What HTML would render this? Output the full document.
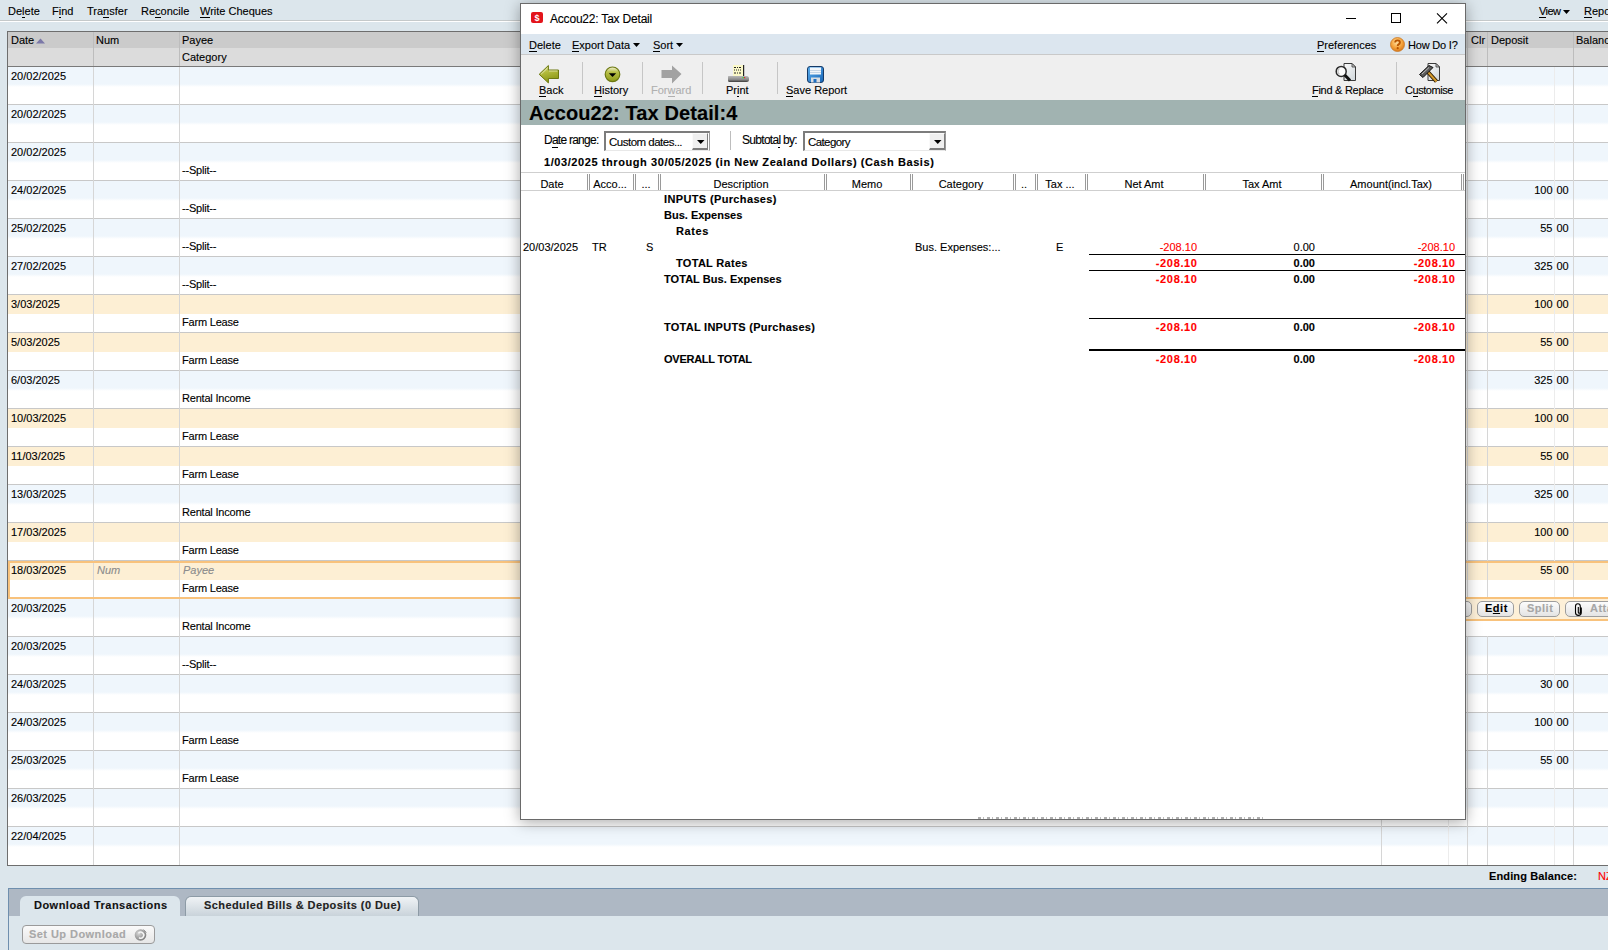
<!DOCTYPE html><html><head><meta charset="utf-8"><style>
html,body{margin:0;padding:0;}
body{width:1608px;height:950px;overflow:hidden;position:relative;background:#dce6ec;font-family:"Liberation Sans",sans-serif;color:#000;}
.t{position:absolute;white-space:nowrap;line-height:1;-webkit-text-stroke:0.12px currentColor;}
.r{position:absolute;}
u{text-decoration:none;border-bottom:1px solid currentColor;}
</style></head><body>
<div class="r" style="left:0px;top:0px;width:1608px;height:20px;background:#dce6ec;"></div>
<div class="r" style="left:0px;top:20px;width:1608px;height:1px;background:#c5c9ca;"></div>
<div class="r" style="left:0px;top:21px;width:1608px;height:1px;background:#ffffff;"></div>
<div class="t" style="left:8px;top:5.69px;font-size:11px;">De<u>l</u>ete</div>
<div class="t" style="left:52px;top:5.69px;font-size:11px;">F<u>i</u>nd</div>
<div class="t" style="left:87px;top:5.69px;font-size:11px;">Tra<u>n</u>sfer</div>
<div class="t" style="left:141px;top:5.69px;font-size:11px;">Re<u>c</u>oncile</div>
<div class="t" style="left:200px;top:5.69px;font-size:11px;"><u>W</u>rite Cheques</div>
<div class="t" style="left:1539px;top:5.69px;font-size:11px;letter-spacing:-0.6px;"><u>V</u>iew</div>
<svg class="r" style="left:1563px;top:10px" width="8" height="5"><path d="M0 0H7L3.5 4Z" fill="#000"/></svg>
<div class="t" style="left:1584px;top:5.69px;font-size:11px;"><u>R</u>eports</div>
<div class="r" style="left:7px;top:31px;width:1601px;height:835px;background:#ffffff;"></div>
<div class="r" style="left:7px;top:31px;width:1601px;height:1px;background:#6e6e6e;"></div>
<div class="r" style="left:7px;top:32px;width:1601px;height:16px;background:#cbcbcb;"></div>
<div class="r" style="left:7px;top:48px;width:1601px;height:18px;background:#dcdcdc;"></div>
<div class="r" style="left:7px;top:66px;width:1601px;height:1px;background:#7a7a7a;"></div>
<div class="r" style="left:7px;top:31px;width:1px;height:835px;background:#6e6e6e;"></div>
<div class="r" style="left:7px;top:865px;width:1601px;height:1px;background:#6e6e6e;"></div>
<div class="r" style="left:8px;top:67px;width:1600px;height:20px;background:linear-gradient(#eff6fc 0px,#eff6fc 17px,#ffffff 20px);"></div>
<div class="r" style="left:8px;top:104px;width:1600px;height:1px;background:#c8c8c8;"></div>
<div class="r" style="left:8px;top:105px;width:1600px;height:20px;background:linear-gradient(#eff6fc 0px,#eff6fc 17px,#ffffff 20px);"></div>
<div class="r" style="left:8px;top:142px;width:1600px;height:1px;background:#c8c8c8;"></div>
<div class="r" style="left:8px;top:143px;width:1600px;height:20px;background:linear-gradient(#eff6fc 0px,#eff6fc 17px,#ffffff 20px);"></div>
<div class="r" style="left:8px;top:180px;width:1600px;height:1px;background:#c8c8c8;"></div>
<div class="r" style="left:8px;top:181px;width:1600px;height:20px;background:linear-gradient(#eff6fc 0px,#eff6fc 17px,#ffffff 20px);"></div>
<div class="r" style="left:8px;top:218px;width:1600px;height:1px;background:#c8c8c8;"></div>
<div class="r" style="left:8px;top:219px;width:1600px;height:20px;background:linear-gradient(#eff6fc 0px,#eff6fc 17px,#ffffff 20px);"></div>
<div class="r" style="left:8px;top:256px;width:1600px;height:1px;background:#c8c8c8;"></div>
<div class="r" style="left:8px;top:257px;width:1600px;height:20px;background:linear-gradient(#eff6fc 0px,#eff6fc 17px,#ffffff 20px);"></div>
<div class="r" style="left:8px;top:294px;width:1600px;height:1px;background:#c8c8c8;"></div>
<div class="r" style="left:8px;top:295px;width:1600px;height:19px;background:#fdefd4;"></div>
<div class="r" style="left:8px;top:332px;width:1600px;height:1px;background:#c8c8c8;"></div>
<div class="r" style="left:8px;top:333px;width:1600px;height:19px;background:#fdefd4;"></div>
<div class="r" style="left:8px;top:370px;width:1600px;height:1px;background:#c8c8c8;"></div>
<div class="r" style="left:8px;top:371px;width:1600px;height:20px;background:linear-gradient(#eff6fc 0px,#eff6fc 17px,#ffffff 20px);"></div>
<div class="r" style="left:8px;top:408px;width:1600px;height:1px;background:#c8c8c8;"></div>
<div class="r" style="left:8px;top:409px;width:1600px;height:19px;background:#fdefd4;"></div>
<div class="r" style="left:8px;top:446px;width:1600px;height:1px;background:#c8c8c8;"></div>
<div class="r" style="left:8px;top:447px;width:1600px;height:19px;background:#fdefd4;"></div>
<div class="r" style="left:8px;top:484px;width:1600px;height:1px;background:#c8c8c8;"></div>
<div class="r" style="left:8px;top:485px;width:1600px;height:20px;background:linear-gradient(#eff6fc 0px,#eff6fc 17px,#ffffff 20px);"></div>
<div class="r" style="left:8px;top:522px;width:1600px;height:1px;background:#c8c8c8;"></div>
<div class="r" style="left:8px;top:523px;width:1600px;height:19px;background:#fdefd4;"></div>
<div class="r" style="left:8px;top:560px;width:1600px;height:1px;background:#c8c8c8;"></div>
<div class="r" style="left:8px;top:561px;width:1600px;height:19px;background:#fdefd4;"></div>
<div class="r" style="left:8px;top:598px;width:1600px;height:1px;background:#c8c8c8;"></div>
<div class="r" style="left:8px;top:599px;width:1600px;height:20px;background:linear-gradient(#eff6fc 0px,#eff6fc 17px,#ffffff 20px);"></div>
<div class="r" style="left:8px;top:636px;width:1600px;height:1px;background:#c8c8c8;"></div>
<div class="r" style="left:8px;top:637px;width:1600px;height:20px;background:linear-gradient(#eff6fc 0px,#eff6fc 17px,#ffffff 20px);"></div>
<div class="r" style="left:8px;top:674px;width:1600px;height:1px;background:#c8c8c8;"></div>
<div class="r" style="left:8px;top:675px;width:1600px;height:20px;background:linear-gradient(#eff6fc 0px,#eff6fc 17px,#ffffff 20px);"></div>
<div class="r" style="left:8px;top:712px;width:1600px;height:1px;background:#c8c8c8;"></div>
<div class="r" style="left:8px;top:713px;width:1600px;height:20px;background:linear-gradient(#eff6fc 0px,#eff6fc 17px,#ffffff 20px);"></div>
<div class="r" style="left:8px;top:750px;width:1600px;height:1px;background:#c8c8c8;"></div>
<div class="r" style="left:8px;top:751px;width:1600px;height:20px;background:linear-gradient(#eff6fc 0px,#eff6fc 17px,#ffffff 20px);"></div>
<div class="r" style="left:8px;top:788px;width:1600px;height:1px;background:#c8c8c8;"></div>
<div class="r" style="left:8px;top:789px;width:1600px;height:20px;background:linear-gradient(#eff6fc 0px,#eff6fc 17px,#ffffff 20px);"></div>
<div class="r" style="left:8px;top:826px;width:1600px;height:1px;background:#c8c8c8;"></div>
<div class="r" style="left:8px;top:827px;width:1600px;height:20px;background:linear-gradient(#eff6fc 0px,#eff6fc 17px,#ffffff 20px);"></div>
<div class="r" style="left:93px;top:67px;width:1px;height:798px;background:#d6d6d6;"></div>
<div class="r" style="left:179px;top:67px;width:1px;height:798px;background:#d6d6d6;"></div>
<div class="r" style="left:1381px;top:67px;width:1px;height:798px;background:#d6d6d6;"></div>
<div class="r" style="left:1448px;top:67px;width:1px;height:798px;background:#ececec;"></div>
<div class="r" style="left:1467px;top:67px;width:1px;height:798px;background:#d6d6d6;"></div>
<div class="r" style="left:1487px;top:67px;width:1px;height:798px;background:#d6d6d6;"></div>
<div class="r" style="left:1554px;top:67px;width:1px;height:798px;background:#ececec;"></div>
<div class="r" style="left:1573px;top:67px;width:1px;height:798px;background:#d6d6d6;"></div>
<div class="r" style="left:93px;top:32px;width:1px;height:34px;background:#bdbdbd;"></div>
<div class="r" style="left:179px;top:32px;width:1px;height:34px;background:#bdbdbd;"></div>
<div class="r" style="left:1381px;top:32px;width:1px;height:34px;background:#bdbdbd;"></div>
<div class="r" style="left:1467px;top:32px;width:1px;height:34px;background:#bdbdbd;"></div>
<div class="r" style="left:1487px;top:32px;width:1px;height:34px;background:#bdbdbd;"></div>
<div class="r" style="left:1573px;top:32px;width:1px;height:34px;background:#bdbdbd;"></div>
<div class="r" style="left:8px;top:561px;width:1600px;height:34px;border:2px solid #f8c27c;border-right:none;"></div>
<div class="r" style="left:1466px;top:597px;width:142px;height:2px;background:#f8c27c;"></div>
<div class="r" style="left:1466px;top:599px;width:142px;height:20px;background:#fdf0d8;"></div>
<div class="r" style="left:1466px;top:619px;width:142px;height:2px;background:#f8c27c;"></div>
<div class="r" style="left:1466px;top:621px;width:142px;height:15px;background:#ffffff;"></div>
<div class="r" style="left:1440px;top:601px;width:32px;height:16px;box-sizing:border-box;border:1px solid #9d9d9d;border-radius:5px;background:linear-gradient(#fcfcfc,#e4e4e4);"></div>
<div class="r" style="left:1477px;top:601px;width:37px;height:16px;box-sizing:border-box;border:1px solid #9d9d9d;border-radius:5px;background:linear-gradient(#fcfcfc,#e4e4e4);"></div>
<div class="r" style="left:1519px;top:601px;width:41px;height:16px;box-sizing:border-box;border:1px solid #9d9d9d;border-radius:5px;background:linear-gradient(#fcfcfc,#e4e4e4);"></div>
<div class="r" style="left:1565px;top:601px;width:60px;height:16px;box-sizing:border-box;border:1px solid #9d9d9d;border-radius:5px;background:linear-gradient(#fcfcfc,#e4e4e4);"></div>
<div class="t" style="left:11px;top:34.69px;font-size:11px;">Date</div>
<svg class="r" style="left:36px;top:38px" width="10" height="6"><path d="M0 5.5L4.5 0.5L9 5.5Z" fill="#7b78a8"/></svg>
<div class="t" style="left:96px;top:34.69px;font-size:11px;">Num</div>
<div class="t" style="left:182px;top:34.69px;font-size:11px;">Payee</div>
<div class="t" style="left:182px;top:51.69px;font-size:11px;">Category</div>
<div class="t" style="left:1471px;top:34.69px;font-size:11px;">Clr</div>
<div class="t" style="left:1491px;top:34.69px;font-size:11px;">Deposit</div>
<div class="t" style="left:1576px;top:34.69px;font-size:11px;">Balance</div>
<div class="t" style="left:11px;top:70.69px;font-size:11px;">20/02/2025</div>
<div class="t" style="left:11px;top:108.69px;font-size:11px;">20/02/2025</div>
<div class="t" style="left:11px;top:146.69px;font-size:11px;">20/02/2025</div>
<div class="t" style="left:182px;top:164.69px;font-size:11px;letter-spacing:-0.2px;">--Split--</div>
<div class="t" style="left:11px;top:184.69px;font-size:11px;">24/02/2025</div>
<div class="t" style="left:182px;top:202.69px;font-size:11px;letter-spacing:-0.2px;">--Split--</div>
<div class="t" style="left:1492.5px;width:60px;text-align:right;top:184.69px;font-size:11px;">100</div>
<div class="t" style="left:1556.5px;top:184.69px;font-size:11px;">00</div>
<div class="t" style="left:11px;top:222.69px;font-size:11px;">25/02/2025</div>
<div class="t" style="left:182px;top:240.69px;font-size:11px;letter-spacing:-0.2px;">--Split--</div>
<div class="t" style="left:1492.5px;width:60px;text-align:right;top:222.69px;font-size:11px;">55</div>
<div class="t" style="left:1556.5px;top:222.69px;font-size:11px;">00</div>
<div class="t" style="left:11px;top:260.69px;font-size:11px;">27/02/2025</div>
<div class="t" style="left:182px;top:278.69px;font-size:11px;letter-spacing:-0.2px;">--Split--</div>
<div class="t" style="left:1492.5px;width:60px;text-align:right;top:260.69px;font-size:11px;">325</div>
<div class="t" style="left:1556.5px;top:260.69px;font-size:11px;">00</div>
<div class="t" style="left:11px;top:298.69px;font-size:11px;">3/03/2025</div>
<div class="t" style="left:182px;top:316.69px;font-size:11px;letter-spacing:-0.2px;">Farm Lease</div>
<div class="t" style="left:1492.5px;width:60px;text-align:right;top:298.69px;font-size:11px;">100</div>
<div class="t" style="left:1556.5px;top:298.69px;font-size:11px;">00</div>
<div class="t" style="left:11px;top:336.69px;font-size:11px;">5/03/2025</div>
<div class="t" style="left:182px;top:354.69px;font-size:11px;letter-spacing:-0.2px;">Farm Lease</div>
<div class="t" style="left:1492.5px;width:60px;text-align:right;top:336.69px;font-size:11px;">55</div>
<div class="t" style="left:1556.5px;top:336.69px;font-size:11px;">00</div>
<div class="t" style="left:11px;top:374.69px;font-size:11px;">6/03/2025</div>
<div class="t" style="left:182px;top:392.69px;font-size:11px;letter-spacing:-0.2px;">Rental Income</div>
<div class="t" style="left:1492.5px;width:60px;text-align:right;top:374.69px;font-size:11px;">325</div>
<div class="t" style="left:1556.5px;top:374.69px;font-size:11px;">00</div>
<div class="t" style="left:11px;top:412.69px;font-size:11px;">10/03/2025</div>
<div class="t" style="left:182px;top:430.69px;font-size:11px;letter-spacing:-0.2px;">Farm Lease</div>
<div class="t" style="left:1492.5px;width:60px;text-align:right;top:412.69px;font-size:11px;">100</div>
<div class="t" style="left:1556.5px;top:412.69px;font-size:11px;">00</div>
<div class="t" style="left:11px;top:450.69px;font-size:11px;">11/03/2025</div>
<div class="t" style="left:182px;top:468.69px;font-size:11px;letter-spacing:-0.2px;">Farm Lease</div>
<div class="t" style="left:1492.5px;width:60px;text-align:right;top:450.69px;font-size:11px;">55</div>
<div class="t" style="left:1556.5px;top:450.69px;font-size:11px;">00</div>
<div class="t" style="left:11px;top:488.69px;font-size:11px;">13/03/2025</div>
<div class="t" style="left:182px;top:506.69px;font-size:11px;letter-spacing:-0.2px;">Rental Income</div>
<div class="t" style="left:1492.5px;width:60px;text-align:right;top:488.69px;font-size:11px;">325</div>
<div class="t" style="left:1556.5px;top:488.69px;font-size:11px;">00</div>
<div class="t" style="left:11px;top:526.69px;font-size:11px;">17/03/2025</div>
<div class="t" style="left:182px;top:544.69px;font-size:11px;letter-spacing:-0.2px;">Farm Lease</div>
<div class="t" style="left:1492.5px;width:60px;text-align:right;top:526.69px;font-size:11px;">100</div>
<div class="t" style="left:1556.5px;top:526.69px;font-size:11px;">00</div>
<div class="t" style="left:11px;top:564.69px;font-size:11px;">18/03/2025</div>
<div class="t" style="left:182px;top:582.69px;font-size:11px;letter-spacing:-0.2px;">Farm Lease</div>
<div class="t" style="left:1492.5px;width:60px;text-align:right;top:564.69px;font-size:11px;">55</div>
<div class="t" style="left:1556.5px;top:564.69px;font-size:11px;">00</div>
<div class="t" style="left:11px;top:602.69px;font-size:11px;">20/03/2025</div>
<div class="t" style="left:182px;top:620.69px;font-size:11px;letter-spacing:-0.2px;">Rental Income</div>
<div class="t" style="left:11px;top:640.69px;font-size:11px;">20/03/2025</div>
<div class="t" style="left:182px;top:658.69px;font-size:11px;letter-spacing:-0.2px;">--Split--</div>
<div class="t" style="left:11px;top:678.69px;font-size:11px;">24/03/2025</div>
<div class="t" style="left:1492.5px;width:60px;text-align:right;top:678.69px;font-size:11px;">30</div>
<div class="t" style="left:1556.5px;top:678.69px;font-size:11px;">00</div>
<div class="t" style="left:11px;top:716.69px;font-size:11px;">24/03/2025</div>
<div class="t" style="left:182px;top:734.69px;font-size:11px;letter-spacing:-0.2px;">Farm Lease</div>
<div class="t" style="left:1492.5px;width:60px;text-align:right;top:716.69px;font-size:11px;">100</div>
<div class="t" style="left:1556.5px;top:716.69px;font-size:11px;">00</div>
<div class="t" style="left:11px;top:754.69px;font-size:11px;">25/03/2025</div>
<div class="t" style="left:182px;top:772.69px;font-size:11px;letter-spacing:-0.2px;">Farm Lease</div>
<div class="t" style="left:1492.5px;width:60px;text-align:right;top:754.69px;font-size:11px;">55</div>
<div class="t" style="left:1556.5px;top:754.69px;font-size:11px;">00</div>
<div class="t" style="left:11px;top:792.69px;font-size:11px;">26/03/2025</div>
<div class="t" style="left:11px;top:830.69px;font-size:11px;">22/04/2025</div>
<div class="t" style="left:1485px;top:602.69px;font-size:11px;font-weight:bold;letter-spacing:0.5px;">E<span style="text-decoration:underline">d</span>it</div>
<div class="t" style="left:1527px;top:602.69px;font-size:11px;font-weight:bold;color:#a6a6a6;letter-spacing:0.5px;">Split</div>
<div class="t" style="left:1590px;top:602.69px;font-size:11px;font-weight:bold;color:#a6a6a6;letter-spacing:0.5px;">Attach</div>
<svg class="r" style="left:1574px;top:603px" width="9" height="13"><path d="M4.3 4V9.2A1 1 0 0 0 6.3 9.2V3.2A2.4 2.4 0 0 0 1.5 3.2V9.5A2.9 2.9 0 0 0 7.3 9.5V4.5" fill="none" stroke="#000" stroke-width="1.1"/></svg>
<div class="t" style="left:97px;top:564.69px;font-size:11px;color:#8c8c8c;font-style:italic;">Num</div>
<div class="t" style="left:183px;top:564.69px;font-size:11px;color:#8c8c8c;font-style:italic;">Payee</div>
<div class="t" style="left:1489px;top:871.19px;font-size:11px;font-weight:bold;letter-spacing:0.12px;">Ending Balance:</div>
<div class="t" style="left:1598px;top:870.69px;font-size:11px;color:#ff0000;">NZ$</div>
<div class="r" style="left:8px;top:888px;width:1600px;height:1px;background:#6f8fae;"></div>
<div class="r" style="left:8px;top:888px;width:1px;height:62px;background:#6f8fae;"></div>
<div class="r" style="left:9px;top:889px;width:1599px;height:27px;background:#aeb8c4;"></div>
<div class="r" style="left:9px;top:916px;width:1599px;height:34px;background:#dce6ec;"></div>
<div class="r" style="left:20px;top:896px;width:160px;height:21px;background:#dce6ec;border-radius:6px 6px 0 0;"></div>
<div class="t" style="left:34px;top:900.19px;font-size:11px;font-weight:bold;color:#111;letter-spacing:0.48px;">Download Transactions</div>
<div class="r" style="left:185px;top:896px;width:232px;height:19px;background:linear-gradient(#f0f3f6,#c9d3da);border:1px solid #8d9ba6;border-bottom:none;border-radius:6px 6px 0 0;"></div>
<div class="t" style="left:204px;top:899.69px;font-size:11px;font-weight:bold;color:#222;letter-spacing:0.42px;">Scheduled Bills &amp; Deposits (0 Due)</div>
<div class="r" style="left:22px;top:925px;width:131px;height:17px;background:linear-gradient(#fafafa,#e6e6e6);border:1px solid #9a9a9a;border-radius:4px;"></div>
<div class="t" style="left:29px;top:929.19px;font-size:11px;font-weight:bold;color:#a8a8a8;letter-spacing:0.45px;">Set Up Download</div>
<svg class="r" style="left:134px;top:928px" width="14" height="14"><defs><radialGradient id="gr" cx="0.35" cy="0.35" r="0.7"><stop offset="0" stop-color="#d8d8d8"/><stop offset="1" stop-color="#7a7a7a"/></radialGradient></defs><circle cx="6.5" cy="7" r="5.8" fill="url(#gr)"/><path d="M4.5 5.2A3 3 0 1 1 5 9.6" fill="none" stroke="#f4f4f4" stroke-width="1.5"/><path d="M9.5 1.5L12.5 4.5" stroke="#999" stroke-width="1"/></svg>
<div class="r" style="left:520px;top:3px;width:946px;height:817px;box-shadow:0 2px 14px rgba(0,0,0,0.35);background:#fff;"></div>
<div class="r" style="left:520px;top:3px;width:946px;height:1px;background:#6a6a6a;"></div>
<div class="r" style="left:520px;top:819px;width:946px;height:1px;background:#6a6a6a;"></div>
<div class="r" style="left:520px;top:3px;width:1px;height:817px;background:#6a6a6a;"></div>
<div class="r" style="left:1465px;top:3px;width:1px;height:817px;background:#6a6a6a;"></div>
<svg class="r" style="left:531px;top:12px" width="12" height="11"><rect x="0" y="0" width="12" height="11" rx="2" fill="#e3141b"/><text x="6" y="9" font-size="9" font-weight="bold" fill="#fff" text-anchor="middle" font-family="Liberation Sans">$</text></svg>
<div class="t" style="left:550px;top:12.84px;font-size:12px;letter-spacing:-0.2px;">Accou22: Tax Detail</div>
<div class="r" style="left:1346px;top:18px;width:10px;height:1px;background:#000;"></div>
<div class="r" style="left:1391px;top:13px;width:8px;height:8px;border:1px solid #000;"></div>
<svg class="r" style="left:1436px;top:12px" width="12" height="12"><path d="M1 1.3L11 11.3M11 1.3L1 11.3" stroke="#000" stroke-width="1.1"/></svg>
<div class="r" style="left:521px;top:34px;width:944px;height:20px;background:#dce6ef;"></div>
<div class="r" style="left:521px;top:54px;width:944px;height:1px;background:#c9c9c9;"></div>
<div class="t" style="left:529px;top:39.69px;font-size:11px;"><u>D</u>elete</div>
<div class="t" style="left:572px;top:39.69px;font-size:11px;"><u>E</u>xport Data</div>
<svg class="r" style="left:633px;top:43px" width="8" height="5"><path d="M0 0H7L3.5 4Z" fill="#000"/></svg>
<div class="t" style="left:653px;top:39.69px;font-size:11px;"><u>S</u>ort</div>
<svg class="r" style="left:676px;top:43px" width="8" height="5"><path d="M0 0H7L3.5 4Z" fill="#000"/></svg>
<div class="t" style="left:1317px;top:39.69px;font-size:11px;"><u>P</u>references</div>
<svg class="r" style="left:1390px;top:37px" width="15" height="15"><defs><radialGradient id="gq" cx="0.45" cy="0.35" r="0.65"><stop offset="0" stop-color="#ffe0a0"/><stop offset="0.6" stop-color="#f5a23a"/><stop offset="1" stop-color="#d9781a"/></radialGradient></defs><circle cx="7.5" cy="7.5" r="7" fill="url(#gq)" stroke="#c97a2a" stroke-width="0.8"/><path d="M5.2 5.6Q5.2 3.4 7.6 3.4Q9.9 3.4 9.9 5.4Q9.9 6.7 8.6 7.3Q7.7 7.8 7.7 8.9" fill="none" stroke="#b85400" stroke-width="1.9"/><circle cx="7.7" cy="11.2" r="1.1" fill="#b85400"/></svg>
<div class="t" style="left:1408px;top:39.69px;font-size:11px;letter-spacing:-0.2px;">How Do I?</div>
<div class="r" style="left:521px;top:55px;width:944px;height:45px;background:#efefef;"></div>
<div class="r" style="left:582px;top:62px;width:1px;height:32px;background:#c6c6c6;"></div>
<div class="r" style="left:642px;top:62px;width:1px;height:32px;background:#c6c6c6;"></div>
<div class="r" style="left:702px;top:62px;width:1px;height:32px;background:#c6c6c6;"></div>
<div class="r" style="left:777px;top:62px;width:1px;height:32px;background:#c6c6c6;"></div>
<div class="r" style="left:1396px;top:62px;width:1px;height:32px;background:#c6c6c6;"></div>
<svg class="r" style="left:538px;top:64px" width="22" height="20"><defs><linearGradient id="gb" x1="0" y1="0" x2="0.3" y2="1"><stop offset="0" stop-color="#e4e6a8"/><stop offset="0.45" stop-color="#b3bb3c"/><stop offset="1" stop-color="#8a9614"/></linearGradient></defs><path d="M1.2 10.3L10.4 1.5V6H20.5V14.5H10.4V18.9Z" fill="url(#gb)" stroke="#6c7810" stroke-width="1"/><path d="M3 10.3L9.4 4.2M11 7H19.5" stroke="#f6f6dc" stroke-width="0.8" opacity="0.8"/></svg>
<div class="t" style="left:539px;top:84.99px;font-size:11px;"><u>B</u>ack</div>
<svg class="r" style="left:604px;top:66px" width="17" height="17"><defs><linearGradient id="gh" x1="0" y1="0" x2="0" y2="1"><stop offset="0" stop-color="#f2f2d8"/><stop offset="0.35" stop-color="#b8bf48"/><stop offset="1" stop-color="#8e9a18"/></linearGradient></defs><circle cx="8.5" cy="8.3" r="7.3" fill="url(#gh)" stroke="#6c7810" stroke-width="1.2"/><path d="M4.8 7.3H12.2L8.5 11Z" fill="#000"/></svg>
<div class="t" style="left:594px;top:84.99px;font-size:11px;"><u>H</u>istory</div>
<svg class="r" style="left:661px;top:65px" width="22" height="19"><path d="M0.5 5H11V0.5L20.5 9L11 18.5V13H0.5Z" fill="#a2a2a2"/></svg>
<div class="t" style="left:651px;top:84.99px;font-size:11px;color:#b0b0b0;">For<u>w</u>ard</div>
<svg class="r" style="left:727px;top:64px" width="23" height="19"><rect x="6" y="1" width="11" height="11" fill="#fbf9c8"/><rect x="16" y="1" width="1.2" height="11" fill="#222"/><path d="M7 3.5h2M10 3.5h1M12 3.5h2M7 6h1M9 6h1M11 6h1M13 6h1M7 9h2M10 9h1M12 9h2" stroke="#222" stroke-width="1.2"/><defs><linearGradient id="gp" x1="0" y1="0" x2="0" y2="1"><stop offset="0" stop-color="#b8b8b8"/><stop offset="0.6" stop-color="#8a8a8a"/><stop offset="1" stop-color="#3a3a3a"/></linearGradient></defs><path d="M1.5 12H19.5Q22 12 22 14.5V15.5Q22 18 19.5 18H2.5Q1 18 1 16.5V13Q1 12 1.5 12Z" fill="url(#gp)"/><rect x="15.5" y="13" width="1.2" height="1.2" fill="#2d2"/><rect x="17" y="13" width="1.2" height="1.2" fill="#e22"/></svg>
<div class="t" style="left:726px;top:84.99px;font-size:11px;">Pr<u>i</u>nt</div>
<svg class="r" style="left:807px;top:66px" width="17" height="17"><defs><linearGradient id="gs" x1="0" y1="0" x2="1" y2="1"><stop offset="0" stop-color="#5fb0ee"/><stop offset="1" stop-color="#1565b8"/></linearGradient></defs><rect x="0.5" y="0.5" width="16" height="16" rx="2.5" fill="url(#gs)" stroke="#163a66"/><rect x="3" y="1.5" width="11" height="7" fill="#f2f6fa"/><path d="M3 4.5h11M3 6.5h11" stroke="#b9cde0" stroke-width="0.8"/><rect x="4" y="11.5" width="9" height="5" fill="#d8dde2"/><rect x="6.5" y="13" width="3" height="3.5" fill="#1f6fc0"/></svg>
<div class="t" style="left:786px;top:84.99px;font-size:11px;"><u>S</u>ave Report</div>
<svg class="r" style="left:1334px;top:62px" width="24" height="21"><defs><linearGradient id="gd" x1="0" y1="0" x2="1" y2="1"><stop offset="0" stop-color="#fbfbfb"/><stop offset="1" stop-color="#cfd6da"/></linearGradient></defs><path d="M10 1.5H18L21.5 5V18.5H10Z" fill="url(#gd)" stroke="#3a3a3a"/><path d="M18 1.5V5H21.5Z" fill="#c9c9c9" stroke="#3a3a3a" stroke-width="0.8"/><circle cx="7.2" cy="9.4" r="5" fill="#fcfcfc" stroke="#2a2a2a" stroke-width="1.5"/><path d="M5.5 6.5A3.5 3.5 0 0 0 5.5 12.3" stroke="#c4c4c4" stroke-width="1.3" fill="none"/><path d="M10.8 13L16 18.5" stroke="#111" stroke-width="3"/></svg>
<div class="t" style="left:1312px;top:84.99px;font-size:11px;letter-spacing:-0.28px;"><u>F</u>ind &amp; Replace</div>
<svg class="r" style="left:1418px;top:62px" width="24" height="22"><path d="M10 1.5H18L21.5 5V18.5H10Z" fill="url(#gd)" stroke="#3a3a3a"/><path d="M18 1.5V5H21.5Z" fill="#c9c9c9" stroke="#3a3a3a" stroke-width="0.8"/><path d="M9.5 9.5L18.5 19.5" stroke="#2a1a00" stroke-width="4"/><path d="M9.5 9.5L18.5 19.5" stroke="#d49a2c" stroke-width="2"/><path d="M1.5 12.5L11 3.5L15 5.5L5 15.5Z" fill="#5a5a5a" stroke="#111" stroke-width="1"/><path d="M4 12L11 5.5" stroke="#bdbdbd" stroke-width="1"/></svg>
<div class="t" style="left:1405px;top:84.99px;font-size:11px;letter-spacing:-0.45px;">C<u>u</u>stomise</div>
<div class="r" style="left:521px;top:100px;width:944px;height:25px;background:#a1b3b1;"></div>
<div class="t" style="left:529px;top:102.57px;font-size:20px;font-weight:bold;letter-spacing:0.1px;">Accou22: Tax Detail:4</div>
<div class="t" style="left:544px;top:133.84px;font-size:12px;letter-spacing:-0.75px;">D<u>a</u>te range:</div>
<div class="r" style="left:604px;top:131px;width:103px;height:17px;border-top:2px solid #7c7c7c;border-left:2px solid #7c7c7c;border-right:1px solid #9a9a9a;border-bottom:1px solid #e8e8e8;background:#fff;"></div>
<div class="r" style="left:692px;top:133px;width:15px;height:15px;background:#efefef;border-bottom:2px solid #7c7c7c;border-right:1px solid #7c7c7c;border-top:1px solid #fafafa;border-left:1px solid #fafafa;box-sizing:border-box;height:17px;width:16px;"></div>
<svg class="r" style="left:697px;top:140px" width="8" height="5"><path d="M0 0H7.5L3.75 4Z" fill="#000"/></svg>
<div class="t" style="left:609px;top:136.97px;font-size:11.5px;letter-spacing:-0.5px;">Custom dates...</div>
<div class="r" style="left:730px;top:131px;width:1px;height:19px;background:#bdbdbd;"></div>
<div class="t" style="left:742px;top:133.84px;font-size:12px;letter-spacing:-0.7px;">Subtota<u>l</u> by:</div>
<div class="r" style="left:803px;top:131px;width:140px;height:17px;border-top:2px solid #7c7c7c;border-left:2px solid #7c7c7c;border-right:1px solid #9a9a9a;border-bottom:1px solid #e8e8e8;background:#fff;"></div>
<div class="r" style="left:929px;top:133px;background:#efefef;border-bottom:2px solid #7c7c7c;border-right:1px solid #7c7c7c;border-top:1px solid #fafafa;border-left:1px solid #fafafa;box-sizing:border-box;height:17px;width:16px;"></div>
<svg class="r" style="left:934px;top:140px" width="8" height="5"><path d="M0 0H7.5L3.75 4Z" fill="#000"/></svg>
<div class="t" style="left:808px;top:136.87px;font-size:11.5px;letter-spacing:-0.6px;">Category</div>
<div class="t" style="left:544px;top:156.69px;font-size:11px;font-weight:bold;letter-spacing:0.58px;">1/03/2025 through 30/05/2025 (in New Zealand Dollars) (Cash Basis)</div>
<div class="r" style="left:521px;top:172px;width:944px;height:1px;background:#cfcfcf;"></div>
<div class="r" style="left:521px;top:190px;width:944px;height:1px;background:#cfcfcf;"></div>
<div class="r" style="left:587px;top:174px;width:1px;height:16px;background:#9a9a9a;"></div>
<div class="r" style="left:589px;top:174px;width:1px;height:16px;background:#9a9a9a;"></div>
<div class="r" style="left:633px;top:174px;width:1px;height:16px;background:#9a9a9a;"></div>
<div class="r" style="left:635px;top:174px;width:1px;height:16px;background:#9a9a9a;"></div>
<div class="r" style="left:658px;top:174px;width:1px;height:16px;background:#9a9a9a;"></div>
<div class="r" style="left:660px;top:174px;width:1px;height:16px;background:#9a9a9a;"></div>
<div class="r" style="left:824px;top:174px;width:1px;height:16px;background:#9a9a9a;"></div>
<div class="r" style="left:826px;top:174px;width:1px;height:16px;background:#9a9a9a;"></div>
<div class="r" style="left:910px;top:174px;width:1px;height:16px;background:#9a9a9a;"></div>
<div class="r" style="left:912px;top:174px;width:1px;height:16px;background:#9a9a9a;"></div>
<div class="r" style="left:1013px;top:174px;width:1px;height:16px;background:#9a9a9a;"></div>
<div class="r" style="left:1015px;top:174px;width:1px;height:16px;background:#9a9a9a;"></div>
<div class="r" style="left:1035px;top:174px;width:1px;height:16px;background:#9a9a9a;"></div>
<div class="r" style="left:1037px;top:174px;width:1px;height:16px;background:#9a9a9a;"></div>
<div class="r" style="left:1085px;top:174px;width:1px;height:16px;background:#9a9a9a;"></div>
<div class="r" style="left:1087px;top:174px;width:1px;height:16px;background:#9a9a9a;"></div>
<div class="r" style="left:1203px;top:174px;width:1px;height:16px;background:#9a9a9a;"></div>
<div class="r" style="left:1205px;top:174px;width:1px;height:16px;background:#9a9a9a;"></div>
<div class="r" style="left:1321px;top:174px;width:1px;height:16px;background:#9a9a9a;"></div>
<div class="r" style="left:1323px;top:174px;width:1px;height:16px;background:#9a9a9a;"></div>
<div class="r" style="left:1461px;top:174px;width:1px;height:16px;background:#9a9a9a;"></div>
<div class="r" style="left:1463px;top:174px;width:1px;height:16px;background:#9a9a9a;"></div>
<div class="t" style="left:452.0px;width:200px;text-align:center;top:178.69px;font-size:11px;">Date</div>
<div class="t" style="left:510.0px;width:200px;text-align:center;top:178.69px;font-size:11px;">Acco...</div>
<div class="t" style="left:546.0px;width:200px;text-align:center;top:178.69px;font-size:11px;">...</div>
<div class="t" style="left:641.0px;width:200px;text-align:center;top:178.69px;font-size:11px;">Description</div>
<div class="t" style="left:767.0px;width:200px;text-align:center;top:178.69px;font-size:11px;">Memo</div>
<div class="t" style="left:861.0px;width:200px;text-align:center;top:178.69px;font-size:11px;">Category</div>
<div class="t" style="left:924.0px;width:200px;text-align:center;top:178.69px;font-size:11px;">..</div>
<div class="t" style="left:960.0px;width:200px;text-align:center;top:178.69px;font-size:11px;">Tax ...</div>
<div class="t" style="left:1044.0px;width:200px;text-align:center;top:178.69px;font-size:11px;">Net Amt</div>
<div class="t" style="left:1162.0px;width:200px;text-align:center;top:178.69px;font-size:11px;">Tax Amt</div>
<div class="t" style="left:1291.0px;width:200px;text-align:center;top:178.69px;font-size:11px;">Amount(incl.Tax)</div>
<div class="t" style="left:664px;top:193.69px;font-size:11px;font-weight:bold;letter-spacing:0.36px;">INPUTS (Purchases)</div>
<div class="t" style="left:664px;top:209.69px;font-size:11px;font-weight:bold;">Bus. Expenses</div>
<div class="t" style="left:676px;top:225.69px;font-size:11px;font-weight:bold;letter-spacing:0.6px;">Rates</div>
<div class="t" style="left:523px;top:241.69px;font-size:11px;">20/03/2025</div>
<div class="t" style="left:592px;top:241.69px;font-size:11px;">TR</div>
<div class="t" style="left:646px;top:241.69px;font-size:11px;">S</div>
<div class="t" style="left:915px;top:241.69px;font-size:11px;">Bus. Expenses:...</div>
<div class="t" style="left:1056px;top:241.69px;font-size:11px;">E</div>
<div class="t" style="left:1097px;width:100px;text-align:right;top:241.69px;font-size:11px;color:#ff0000;">-208.10</div>
<div class="t" style="left:1215px;width:100px;text-align:right;top:241.69px;font-size:11px;">0.00</div>
<div class="t" style="left:1355px;width:100px;text-align:right;top:241.69px;font-size:11px;color:#ff0000;">-208.10</div>
<div class="r" style="left:1089px;top:254px;width:376px;height:1px;background:#000;"></div>
<div class="t" style="left:676px;top:257.69px;font-size:11px;font-weight:bold;letter-spacing:0.3px;">TOTAL Rates</div>
<div class="t" style="left:1097.65px;width:100px;text-align:right;top:257.69px;font-size:11px;font-weight:bold;color:#ff0000;letter-spacing:0.65px;">-208.10</div>
<div class="t" style="left:1215px;width:100px;text-align:right;top:257.69px;font-size:11px;font-weight:bold;">0.00</div>
<div class="t" style="left:1355.65px;width:100px;text-align:right;top:257.69px;font-size:11px;font-weight:bold;color:#ff0000;letter-spacing:0.65px;">-208.10</div>
<div class="r" style="left:1089px;top:270px;width:376px;height:1px;background:#000;"></div>
<div class="t" style="left:664px;top:273.69px;font-size:11px;font-weight:bold;letter-spacing:0.05px;">TOTAL Bus. Expenses</div>
<div class="t" style="left:1097.65px;width:100px;text-align:right;top:273.69px;font-size:11px;font-weight:bold;color:#ff0000;letter-spacing:0.65px;">-208.10</div>
<div class="t" style="left:1215px;width:100px;text-align:right;top:273.69px;font-size:11px;font-weight:bold;">0.00</div>
<div class="t" style="left:1355.65px;width:100px;text-align:right;top:273.69px;font-size:11px;font-weight:bold;color:#ff0000;letter-spacing:0.65px;">-208.10</div>
<div class="r" style="left:1089px;top:318px;width:376px;height:1px;background:#000;"></div>
<div class="t" style="left:664px;top:321.69px;font-size:11px;font-weight:bold;letter-spacing:0.26px;">TOTAL INPUTS (Purchases)</div>
<div class="t" style="left:1097.65px;width:100px;text-align:right;top:321.69px;font-size:11px;font-weight:bold;color:#ff0000;letter-spacing:0.65px;">-208.10</div>
<div class="t" style="left:1215px;width:100px;text-align:right;top:321.69px;font-size:11px;font-weight:bold;">0.00</div>
<div class="t" style="left:1355.65px;width:100px;text-align:right;top:321.69px;font-size:11px;font-weight:bold;color:#ff0000;letter-spacing:0.65px;">-208.10</div>
<div class="r" style="left:1089px;top:349px;width:376px;height:2px;background:#000;"></div>
<div class="t" style="left:664px;top:353.69px;font-size:11px;font-weight:bold;letter-spacing:-0.25px;">OVERALL TOTAL</div>
<div class="t" style="left:1097.65px;width:100px;text-align:right;top:353.69px;font-size:11px;font-weight:bold;color:#ff0000;letter-spacing:0.65px;">-208.10</div>
<div class="t" style="left:1215px;width:100px;text-align:right;top:353.69px;font-size:11px;font-weight:bold;">0.00</div>
<div class="t" style="left:1355.65px;width:100px;text-align:right;top:353.69px;font-size:11px;font-weight:bold;color:#ff0000;letter-spacing:0.65px;">-208.10</div>
<div class="r" style="left:978px;top:817px;width:288px;height:2px;background:repeating-linear-gradient(90deg,#333 0 3px,transparent 3px 5px,#555 5px 6px,transparent 6px 9px);opacity:0.4;"></div>
</body></html>
